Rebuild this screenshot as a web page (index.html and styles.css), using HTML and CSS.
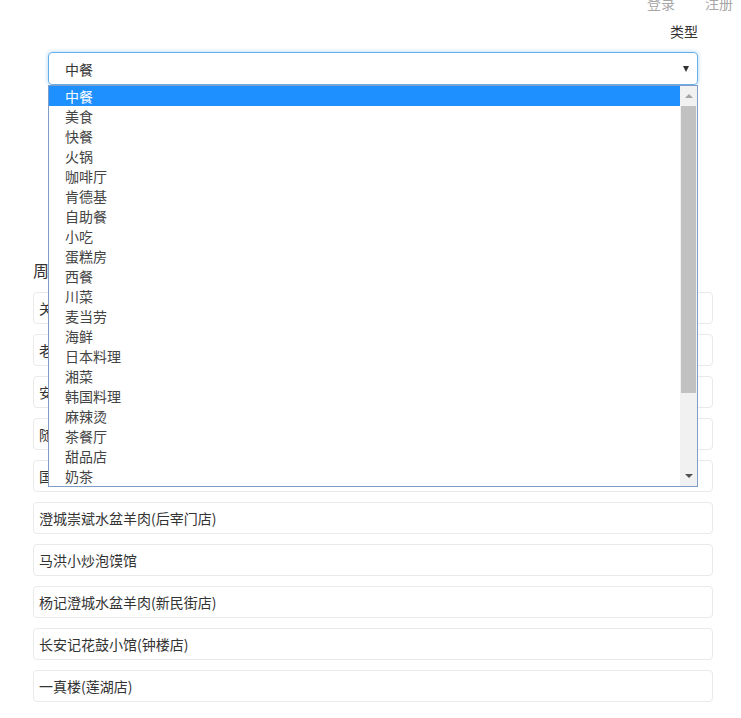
FILE: index.html
```html
<!DOCTYPE html>
<html lang="zh">
<head>
<meta charset="utf-8">
<title>周边餐厅</title>
<link rel="stylesheet" href="styles.css">
</head>
<body>
<header class="topbar">
  <a class="toplink" href="#">登录</a>
  <a class="toplink" href="#">注册</a>
</header>
<section class="filter">
  <div class="field-label">类型</div>
  <div class="select-wrap">
    <div class="select">
      <span class="select-value">中餐</span>
      <span class="select-arrow"></span>
    </div>
    <div class="dropdown">
      <ul class="options">
        <li class="option selected">中餐</li>
        <li class="option">美食</li>
        <li class="option">快餐</li>
        <li class="option">火锅</li>
        <li class="option">咖啡厅</li>
        <li class="option">肯德基</li>
        <li class="option">自助餐</li>
        <li class="option">小吃</li>
        <li class="option">蛋糕房</li>
        <li class="option">西餐</li>
        <li class="option">川菜</li>
        <li class="option">麦当劳</li>
        <li class="option">海鲜</li>
        <li class="option">日本料理</li>
        <li class="option">湘菜</li>
        <li class="option">韩国料理</li>
        <li class="option">麻辣烫</li>
        <li class="option">茶餐厅</li>
        <li class="option">甜品店</li>
        <li class="option">奶茶</li>
      </ul>
      <div class="scrollbar">
        <span class="sb-up"></span>
        <div class="sb-track"><div class="sb-thumb"></div></div>
        <span class="sb-down"></span>
      </div>
    </div>
  </div>
</section>
<section class="results">
  <h2 class="results-title">周边餐厅</h2>
  <ul class="cards">
    <li class="card">关中印象咥长安(钟楼店)</li>
    <li class="card">老孙家饭庄(东大街店)</li>
    <li class="card">安记泡馍馆</li>
    <li class="card">随园食府</li>
    <li class="card">国际美食城</li>
    <li class="card">澄城崇斌水盆羊肉(后宰门店)</li>
    <li class="card">马洪小炒泡馍馆</li>
    <li class="card">杨记澄城水盆羊肉(新民街店)</li>
    <li class="card">长安记花鼓小馆(钟楼店)</li>
    <li class="card">一真楼(莲湖店)</li>
  </ul>
</section>
</body>
</html>
```

FILE: styles.css
```css
* { box-sizing: border-box; }
html, body { margin: 0; padding: 0; background: #fff; }
body {
  font-family: "Noto Sans CJK SC", "Liberation Sans", sans-serif;
  font-size: 14px;
  color: #333;
  overflow: hidden;
}
.topbar {
  display: flex;
  justify-content: flex-end;
  gap: 30px;
  margin-top: -7px;
  padding-right: 8px;
  height: 20px;
  line-height: 20px;
}
.toplink { color: #a6a6a6; text-decoration: none; }
.filter {
  padding: 8px 43px 0 48px;
}
.field-label {
  text-align: right;
  line-height: 20px;
  color: #333;
  margin-bottom: 11px;
}
.select-wrap { position: relative; }
.select {
  height: 33px;
  border: 1px solid #66afe9;
  border-radius: 4px;
  box-shadow: 0 0 4px rgba(102, 175, 233, 0.55);
  display: flex;
  align-items: center;
  justify-content: space-between;
  padding: 0 8px 0 16px;
}
.select-value { color: #333; }
.select-arrow {
  width: 0; height: 0;
  border-left: 3.5px solid transparent;
  border-right: 3.5px solid transparent;
  border-top: 6px solid #333;
}
.dropdown {
  position: absolute;
  left: 0; right: 0;
  top: 33px;
  height: 402px;
  border: 1px solid #7f9dc7;
  background: #fff;
  display: flex;
  z-index: 5;
}
.options { list-style: none; margin: 0; padding: 0; flex: 1; }
.option {
  height: 20px;
  line-height: 20px;
  padding-left: 16px;
  color: #444;
}
.option.selected { background: #1e90ff; color: #fff; }
.scrollbar {
  width: 17px;
  background: #f1f1f1;
  display: flex;
  flex-direction: column;
  align-items: center;
}
.sb-up, .sb-down { height: 20px; width: 17px; display: flex; justify-content: center; align-items: center; }
.sb-up::before {
  content: ""; width: 0; height: 0;
  border-left: 4px solid transparent; border-right: 4px solid transparent;
  border-bottom: 4px solid #a3a3a3;
}
.sb-down::before {
  content: ""; width: 0; height: 0;
  border-left: 4px solid transparent; border-right: 4px solid transparent;
  border-top: 4px solid #505050;
}
.sb-track { flex: 1; width: 17px; padding: 0 1px; }
.sb-thumb { height: 287px; background: #c1c1c1; }
.results {
  padding: 0 28px 0 33px;
  margin-top: 172px;
}
.results-title {
  margin: 0 0 9px;
  font-size: 16px;
  font-weight: normal;
  line-height: 26px;
  color: #333;
}
.cards { list-style: none; margin: 0; padding: 0; display: flex; flex-direction: column; gap: 10px; }
.card {
  height: 32px;
  line-height: 30px;
  border: 1px solid #e9e9e9;
  border-radius: 4px;
  padding-left: 5px;
  color: #333;
}
```
